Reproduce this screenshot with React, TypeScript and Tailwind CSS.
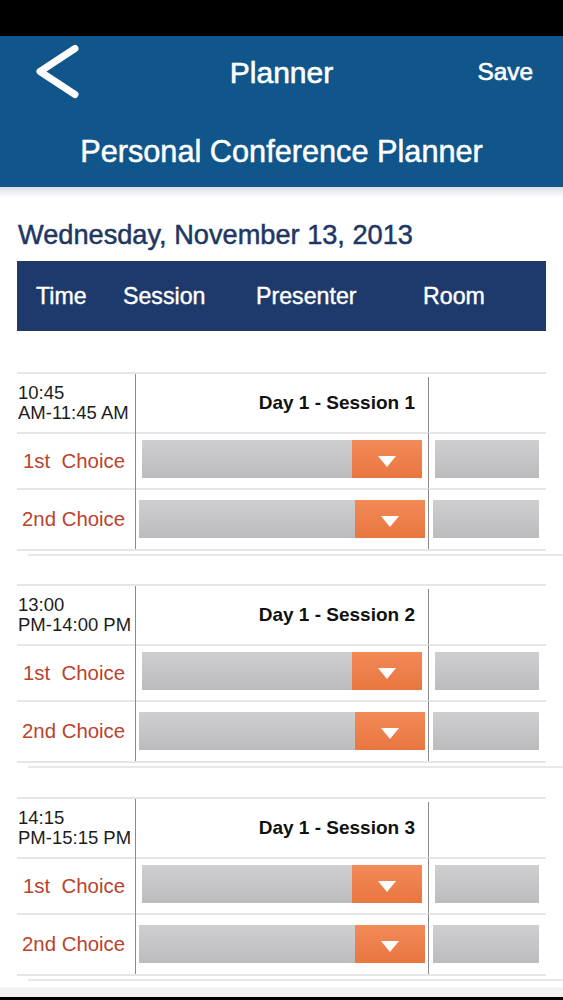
import React from "react";

type Block = { t1: string; t2: string; title: string };

const blocks: Block[] = [
  { t1: "10:45", t2: "AM-11:45 AM", title: "Day 1 - Session 1" },
  { t1: "13:00", t2: "PM-14:00 PM", title: "Day 1 - Session 2" },
  { t1: "14:15", t2: "PM-15:15 PM", title: "Day 1 - Session 3" },
];

function Dropdown() {
  return (
    <div className="flex h-[38px] w-full bg-gradient-to-b from-[#cfcfd1] to-[#bcbcbe]">
      <div className="flex-1" />
      <div className="flex w-[70px] items-center justify-center bg-gradient-to-b from-[#f28a58] to-[#e9763f] pt-[4px]">
        <svg width="18" height="11" viewBox="0 0 18 11">
          <polygon points="0,0 18,0 9,11" fill="#ffffff" />
        </svg>
      </div>
    </div>
  );
}

function GrayBox() {
  return <div className="h-[38px] w-full bg-gradient-to-b from-[#cfcfd1] to-[#bcbcbe]" />;
}

function SessionBlock({ b }: { b: Block }) {
  const line = "border-t-2 border-[#e6e6e6]";
  return (
    <div className="mx-[17px] flex border-y-2 border-[#e6e6e6]">
      {/* time column */}
      <div className="flex w-[118px] flex-col">
        <div className="flex h-[58px] flex-col justify-center pl-[1px] text-[18.5px] leading-[20px] text-[#1c1c1c]">
          <div>{b.t1}</div>
          <div className="whitespace-nowrap">{b.t2}</div>
        </div>
        <div className={`${line} flex h-[56px] items-center whitespace-nowrap pl-[6px] text-[20.4px] text-[#b9432d]`}>
          1st&nbsp;&nbsp;Choice
        </div>
        <div className={`${line} flex h-[61px] items-center whitespace-nowrap pl-[5px] text-[20.4px] text-[#b9432d]`}>
          2nd Choice
        </div>
      </div>
      {/* session column */}
      <div className="flex w-[293px] flex-col border-l-[1.5px] border-[#8a8a8a]">
        <div className="flex h-[58px] items-center justify-end pr-[13px] text-[19px] font-bold text-[#111]">
          {b.title}
        </div>
        <div className={`${line} h-[56px] pl-[5.5px] pr-[6px] pt-[6px]`}>
          <Dropdown />
        </div>
        <div className={`${line} h-[61px] pl-[2.5px] pr-[3px] pt-[10px]`}>
          <Dropdown />
        </div>
      </div>
      {/* room column */}
      <div className="flex flex-1 flex-col">
        <div className="h-[58px] pt-[3px]">
          <div className="h-full border-l-[1.5px] border-[#8a8a8a]" />
        </div>
        <div className={`${line} h-[56px] border-l-[1.5px] border-l-[#8a8a8a] pl-[5.5px] pr-[7px] pt-[6px]`}>
          <GrayBox />
        </div>
        <div className={`${line} h-[61px] border-l-[1.5px] border-l-[#8a8a8a] pl-[3.5px] pr-[7px] pt-[10px]`}>
          <GrayBox />
        </div>
      </div>
    </div>
  );
}

export default function App() {
  return (
    <div className="flex h-[1000px] w-[563px] flex-col overflow-hidden bg-white font-['Liberation_Sans',Arial,sans-serif]">
      <div className="h-[36px] bg-black" />
      <div className="h-[151px] bg-[#10568a] text-white">
        <div className="grid h-[72px] grid-cols-[1fr_auto_1fr] items-center">
          <div className="flex items-center pl-[30px]">
            <svg width="54" height="62" viewBox="0 0 54 62">
              <polyline
                points="45,7.5 10,30.5 45,53.5"
                fill="none"
                stroke="#ffffff"
                strokeWidth="7"
                strokeLinecap="round"
                strokeLinejoin="round"
              />
            </svg>
          </div>
          <div className="text-[30px] [-webkit-text-stroke:0.6px_white]">Planner</div>
          <div className="flex justify-end pr-[30px] text-[24.4px] [-webkit-text-stroke:0.6px_white]">Save</div>
        </div>
        <div className="flex h-[79px] items-center justify-center pt-[9px] text-[30.7px] [-webkit-text-stroke:0.5px_white]">
          Personal Conference Planner
        </div>
      </div>
      <div className="h-[10px] bg-gradient-to-b from-[#d9dee4] to-white" />
      <div className="mt-[23px] h-[30px] whitespace-nowrap pl-[18px] text-[27.2px] leading-[30px] text-[#1f3764] [-webkit-text-stroke:0.5px_#1f3764]">
        Wednesday, November 13, 2013
      </div>
      <div className="mx-[17px] mt-[11px] flex h-[70px] items-center bg-[#1e3a6d] pl-[19px] text-[23.2px] text-white [-webkit-text-stroke:0.4px_white]">
        <span className="w-[87px]">Time</span>
        <span className="w-[133px]">Session</span>
        <span className="w-[167px]">Presenter</span>
        <span>Room</span>
      </div>
      <div className="mt-[41px]">
        {blocks.map((b, i) => (
          <div key={i} className={i === 0 ? "" : i === 1 ? "mt-[28px]" : "mt-[29px]"}>
            <SessionBlock b={b} />
            <div className="ml-[28px] mt-[3px] h-[2px] bg-[#e8e8e8]" />
          </div>
        ))}
      </div>
      <div className="mt-[6px] h-[10px] bg-[#f3f3f3]" />
      <div className="flex-1 bg-black" />
    </div>
  );
}
